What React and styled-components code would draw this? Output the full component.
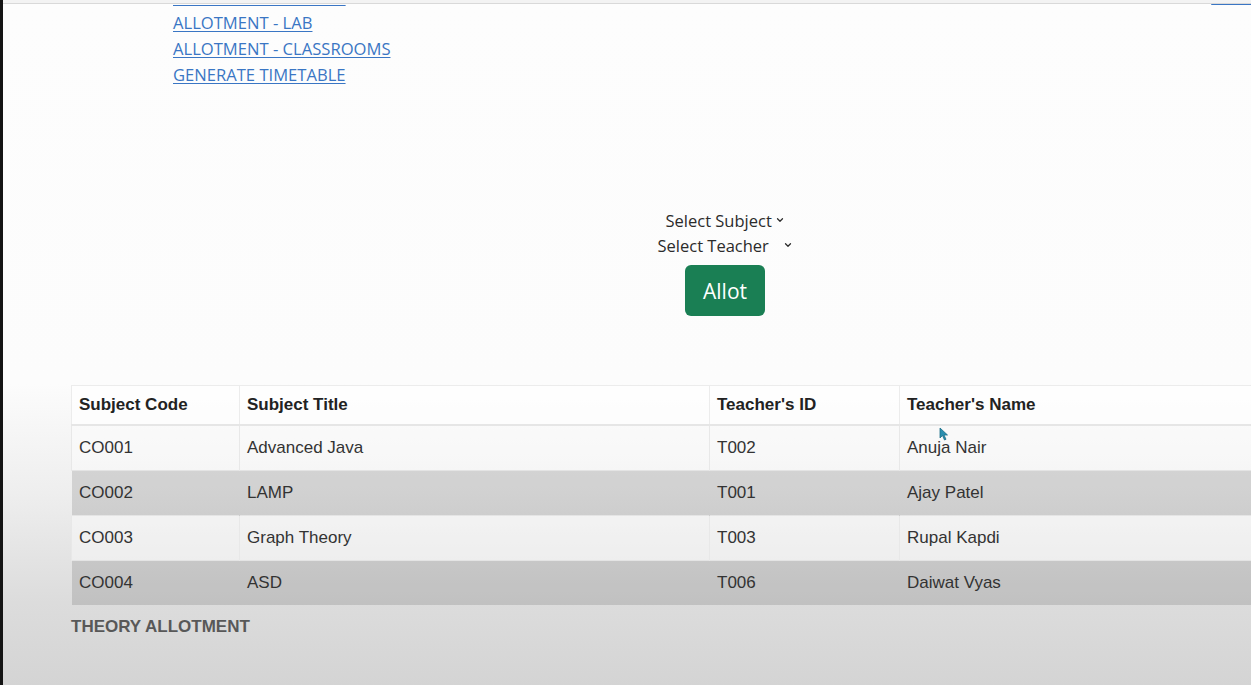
import React from "react";
import styled, { createGlobalStyle } from "styled-components";
import { ChevronDown } from "lucide-react";

const GlobalStyle = createGlobalStyle`
  html, body {
    margin: 0;
    padding: 0;
    overflow: hidden;
  }
  body {
    font-family: "Open Sans", "Liberation Sans", sans-serif;
  }
`;

const Page = styled.div`
  position: relative;
  height: 685px;
  overflow: hidden;
  border-left: 3px solid #141414;
  background: linear-gradient(
    to bottom,
    #fdfdfd 0%,
    #fcfcfc 56%,
    #eeeeee 72%,
    #dcdcdc 88%,
    #d4d4d4 100%
  );
`;

const TopEdge = styled.div`
  height: 3px;
  background: #f3f3f3;
  border-bottom: 1px solid #d9d9d9;
  position: relative;
  z-index: 2;
`;

const Content = styled.div`
  display: flex;
  flex-direction: column;
`;

const Header = styled.div`
  display: flex;
  justify-content: space-between;
  margin-top: -20px;
`;

const NavList = styled.ul`
  list-style: none;
  margin: 0;
  padding: 0 0 0 170px;
`;

const NavItem = styled.li`
  line-height: 26px;
  font-size: 16.6px;
`;

const NavLink = styled.a`
  color: #3a76c4;
  text-decoration: underline;
  text-underline-offset: 2px;
  cursor: pointer;
`;

const SideLink = styled.a`
  color: #3a76c4;
  font-size: 16.6px;
  line-height: 26px;
  text-decoration: underline;
  margin-right: -28px;
  white-space: nowrap;
`;

const Form = styled.div`
  display: flex;
  flex-direction: column;
  align-items: center;
  margin-top: 120px;
  padding-left: 196px;
`;

const Select = styled.div`
  display: inline-flex;
  align-items: center;
  justify-content: space-between;
  width: ${({ $w }) => $w}px;
  height: 24px;
  margin-bottom: ${({ $mb }) => $mb || 0}px;
  font-size: 16.5px;
  color: #2b2b2b;
  cursor: pointer;
`;

const Button = styled.button`
  width: 80px;
  height: 51px;
  margin-top: 8px;
  border: none;
  border-radius: 6px;
  background: #1a7f54;
  color: #ffffff;
  font-family: "Open Sans", "Liberation Sans", sans-serif;
  font-size: 21px;
  cursor: pointer;
`;

const TableWrap = styled.div`
  margin: 69px 0 0 68px;
`;

const Table = styled.table`
  width: 1400px;
  table-layout: fixed;
  border-collapse: collapse;
  font-family: "Liberation Sans", Arial, sans-serif;
  font-size: 17px;
  color: #333;
`;

const Caption = styled.caption`
  caption-side: bottom;
  text-align: left;
  padding-top: 12px;
  font-weight: bold;
  color: #585858;
`;

const HeadCell = styled.th`
  height: 38px;
  padding: 0 7px;
  text-align: left;
  font-weight: bold;
  color: #222;
  background: rgba(255, 255, 255, 0.7);
  border: 1px solid #ececec;
  border-bottom: 2px solid #e6e6e6;
`;

const Row = styled.tr`
  background: ${({ $alt }) => ($alt ? "rgba(0, 0, 0, 0.12)" : "rgba(255, 255, 255, 0.4)")};
`;

const Cell = styled.td`
  height: 44px;
  padding: 0 7px;
  border-left: 1px solid ${({ $alt }) => ($alt ? "transparent" : "#e8e8e8")};
  border-top: 1px solid #e4e4e4;
  white-space: nowrap;
`;

const Cursor = styled.svg`
  position: absolute;
  left: 936px;
  top: 427px;
`;

const rows = [
  ["CO001", "Advanced Java", "T002", "Anuja Nair"],
  ["CO002", "LAMP", "T001", "Ajay Patel"],
  ["CO003", "Graph Theory", "T003", "Rupal Kapdi"],
  ["CO004", "ASD", "T006", "Daiwat Vyas"],
];

const links = [
  "ALLOTMENT - THEORY",
  "ALLOTMENT - LAB",
  "ALLOTMENT - CLASSROOMS",
  "GENERATE TIMETABLE",
];

export default function App() {
  return (
    <>
      <GlobalStyle />
      <Page>
        <TopEdge />
        <Content>
          <Header>
            <NavList>
              {links.map((l) => (
                <NavItem key={l}>
                  <NavLink>{l}</NavLink>
                </NavItem>
              ))}
            </NavList>
            <SideLink>LOGOUT</SideLink>
          </Header>

          <Form>
            <Select $w={119} $mb={1}>
              <span>Select Subject</span>
              <ChevronDown size={10} strokeWidth={3} />
            </Select>
            <Select $w={135}>
              <span>Select Teacher</span>
              <ChevronDown size={10} strokeWidth={3} />
            </Select>
            <Button>Allot</Button>
          </Form>

          <TableWrap>
            <Table>
              <colgroup>
                <col style={{ width: 168 }} />
                <col style={{ width: 470 }} />
                <col style={{ width: 190 }} />
                <col />
              </colgroup>
              <Caption>THEORY ALLOTMENT</Caption>
              <thead>
                <tr>
                  <HeadCell>Subject Code</HeadCell>
                  <HeadCell>Subject Title</HeadCell>
                  <HeadCell>Teacher's ID</HeadCell>
                  <HeadCell>Teacher's Name</HeadCell>
                </tr>
              </thead>
              <tbody>
                {rows.map((r, i) => (
                  <Row key={r[0]} $alt={i % 2 === 1}>
                    {r.map((c, j) => (
                      <Cell key={j} $alt={i % 2 === 1}>
                        {c}
                      </Cell>
                    ))}
                  </Row>
                ))}
              </tbody>
            </Table>
          </TableWrap>
        </Content>
        <Cursor width="10" height="14" viewBox="0 0 10 14">
          <path d="M1 1 L1 11 L3.5 8.5 L5.5 13 L7 12.3 L5 8 L8.5 8 Z" fill="#2a8fb0" stroke="#1d6e88" strokeWidth="0.8" />
        </Cursor>
      </Page>
    </>
  );
}
